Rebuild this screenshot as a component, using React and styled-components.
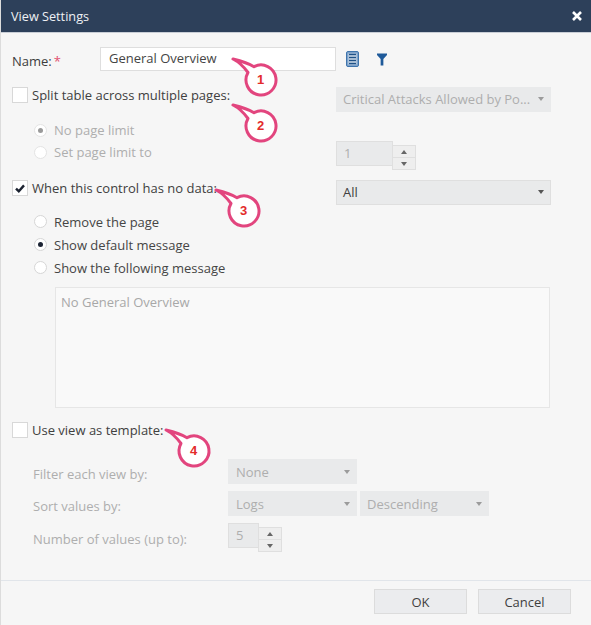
import React from 'react';
import styled, { createGlobalStyle } from 'styled-components';

const Global = createGlobalStyle`
  html, body { margin: 0; padding: 0; background: #f6f6f6; }
  body { font-family: "Open Sans", "Noto Sans", sans-serif; font-size: 13px; color: #3d3d3d; }
`;

const Dialog = styled.div`
  position: relative;
  width: 591px;
  height: 625px;
  background: #f6f6f6;
  overflow: hidden;
  display: flex;
  flex-direction: column;
  border-left: 1px solid #dcdcdc;
  box-sizing: border-box;
`;
const Header = styled.header`
  height: 32px;
  flex: none;
  background: #2d405a;
  border-bottom: 1px solid #c9ced6;
  box-sizing: content-box;
  display: flex;
  align-items: center;
  justify-content: space-between;
  padding: 0 9px 0 10px;
  color: #eef1f5;
  font-size: 12.7px;
`;
const Close = styled.svg`
  width: 10px;
  height: 10px;
  margin-top: -1px;
`;
const Body = styled.main`
  flex: 1;
  display: flex;
  flex-direction: column;
  padding: 14px 0 0 11px;
  min-height: 0;
`;
const Row = styled.div`
  display: flex;
  align-items: ${p => p.$align || 'center'};
  height: ${p => p.$h}px;
  margin-top: ${p => p.$mt || 0}px;
  margin-left: ${p => p.$ml || 0}px;
`;
const NameLabel = styled.label`
  width: 88px;
  display: flex;
  gap: 2px;
  padding-top: 4px;
`;
const Star = styled.span`
  color: #e2506f;
`;
const TextInput = styled.div`
  width: 236px;
  height: 24px;
  box-sizing: border-box;
  background: #fff;
  border: 1px solid #dedede;
  padding-left: 8px;
  line-height: 21px;
  color: #444;
`;
const IconGroup = styled.div`
  display: flex;
  align-items: center;
  margin-left: 10px;
  gap: 18px;
`;
const CheckBox = styled.span`
  width: 16px;
  height: 16px;
  box-sizing: border-box;
  border: 1px solid #d8d8d8;
  background: #fff;
  flex: none;
  display: flex;
  align-items: center;
  justify-content: center;
`;
const CheckLabel = styled.span`
  margin-left: 4px;
  width: 304px;
  flex: none;
  color: #404040;
  line-height: 16px;
`;
const Radio = styled.span`
  width: 13px;
  height: 13px;
  border-radius: 50%;
  box-sizing: border-box;
  border: 1px solid ${p => p.$disabled ? '#e4e4e4' : '#d6d6d6'};
  background: #fff;
  flex: none;
  display: flex;
  align-items: center;
  justify-content: center;
  margin-right: 7px;
  margin-top: ${p => p.$mt || 0}px;
  &::after {
    content: '';
    display: ${p => p.$on ? 'block' : 'none'};
    width: 5px;
    height: 5px;
    border-radius: 50%;
    background: ${p => p.$disabled ? '#9a9a9a' : '#1c2434'};
  }
`;
const RadioText = styled.span`
  color: ${p => p.$disabled ? '#aeaeae' : '#454545'};
  width: ${p => p.$w ? `${p.$w}px` : 'auto'};
  line-height: 22px;
  flex: none;
`;
const Select = styled.div`
  width: ${p => p.$w}px;
  height: 25px;
  box-sizing: border-box;
  background: #e9eaeb;
  border: 1px solid ${p => p.$disabled ? '#e9eaeb' : '#dfdfdf'};
  margin-right: ${p => p.$mr || 0}px;
  padding: 0 7px ${p => p.$pb || 0}px ${p => p.$pl || 6}px;
  display: flex;
  align-items: center;
  justify-content: space-between;
  color: ${p => p.$disabled ? '#aeaeae' : '#404040'};
  flex: none;
  &::after {
    content: '';
    border-left: 3.5px solid transparent;
    border-right: 3.5px solid transparent;
    border-top: 4px solid ${p => p.$disabled ? '#9b9b9b' : '#555'};
    margin-right: -1px;
  }
`;
const Spinner = styled.div`
  display: flex;
  width: ${p => p.$w}px;
  flex: none;
  align-items: flex-start;
`;
const SpinField = styled.div`
  flex: 1;
  height: 25px;
  box-sizing: border-box;
  background: #e9eaeb;
  border: 1px solid #dfdfdf;
  color: #aeaeae;
  padding-left: 7px;
  line-height: 23px;
`;
const SpinButtons = styled.div`
  width: 24px;
  margin-left: -1px;
  margin-top: 4px;
  display: flex;
  flex-direction: column;
  border: 1px solid #dfdfdf;
  box-sizing: border-box;
  background: #eeeeee;
`;
const SpinBtn = styled.span`
  height: 11px;
  display: flex;
  align-items: center;
  justify-content: center;
  & + & { border-top: 1px solid #dfdfdf; }
  &::after {
    content: '';
    border-left: 3.5px solid transparent;
    border-right: 3.5px solid transparent;
    ${p => p.$up ? 'border-bottom: 4px solid #666;' : 'border-top: 4px solid #666;'}
  }
`;
const MessageBox = styled.div`
  margin: 8px 0 0 43px;
  width: 495px;
  height: 121px;
  box-sizing: border-box;
  background: #f9f9f9;
  border: 1px solid #e6e6e6;
  padding: 5px 5px;
  color: #a8a8a8;
`;
const FieldLabel = styled.span`
  width: 216px;
  padding-left: 21px;
  box-sizing: border-box;
  color: #aeaeae;
  flex: none;
  position: relative;
  top: ${p => p.$dy}px;
`;
const Footer = styled.footer`
  height: 45px;
  box-sizing: border-box;
  flex: none;
  border-top: 1px solid #e1e5ea;
  display: flex;
  justify-content: flex-end;
  align-items: flex-start;
  gap: 11px;
  padding: 8px 20px 0 0;
`;
const Button = styled.button`
  width: 93px;
  height: 25px;
  border: 1px solid #dcdcdc;
  background: #ebecee;
  font: inherit;
  color: #3f3f3f;
  padding: 0;
`;
const CalloutMark = styled.svg`
  position: absolute;
  left: ${p => p.$x - 31}px;
  top: ${p => p.$y - 24}px;
  width: 50px;
  height: 44px;
  overflow: visible;
`;
const CalloutNum = styled.text`
  font-family: "Liberation Sans", Arial, sans-serif;
  font-size: 13px;
  font-weight: 700;
  fill: #e32b2b;
  text-anchor: middle;
`;

const Callout = ({ x, y, n }) => (
  <CalloutMark $x={x} $y={y} viewBox="-30 -24 50 44">
    <path d="M-28 -21 C-20 -19 -13 -17 -7 -13.3 A15 15 0 1 1 -13 -7.5 C-17 -13 -22 -18 -28 -21 Z"
      fill="#fff" stroke="#e2457e" strokeWidth="3" strokeLinejoin="round" />
    <CalloutNum x="-0.5" y="4">{n}</CalloutNum>
  </CalloutMark>
);

const Check = () => (
  <svg width="10" height="9" viewBox="0 0 10 9">
    <path d="M1 4.6 L3.8 7.2 L9 1.4" fill="none" stroke="#1b2230" strokeWidth="2.4" />
  </svg>
);

const TableIcon = () => (
  <svg width="13" height="16" viewBox="0 0 13 16">
    <rect x="0.5" y="0.5" width="12" height="15" rx="1.5" fill="#7ea3cb" stroke="#3f75ad" />
    <rect x="2.5" y="2.5" width="8" height="11" fill="#d3dfeb" />
    <path d="M3 3.5h7M3 6.5h7M3 9.5h7M3 12.5h7" stroke="#1f5288" strokeWidth="1.4" />
  </svg>
);

const FilterIcon = () => (
  <svg width="10" height="13" viewBox="0 0 11 13">
    <path d="M0 0 H11 V1.5 L7 6 V13 H4 V6 L0 1.5 Z" fill="#1f5a9a" />
  </svg>
);

const NumberSpinner = ({ w, value }) => (
  <Spinner $w={w}>
    <SpinField>{value}</SpinField>
    <SpinButtons><SpinBtn $up /><SpinBtn /></SpinButtons>
  </Spinner>
);

export default function App() {
  return (
    <Dialog>
      <Global />
      <Header>
        <span>View Settings</span>
        <Close viewBox="0 0 10 10">
          <path d="M1 1 L9 9 M9 1 L1 9" stroke="#fff" strokeWidth="2.6" />
        </Close>
      </Header>
      <Body>
        <Row $h={24}>
          <NameLabel>Name:<Star>*</Star></NameLabel>
          <TextInput>General Overview</TextInput>
          <IconGroup><TableIcon /><FilterIcon /></IconGroup>
        </Row>
        <Row $h={25} $mt={16} $align="flex-start">
          <CheckBox />
          <CheckLabel>Split table across multiple pages:</CheckLabel>
          <Select $w={215} $pb={2} $disabled>Critical Attacks Allowed by Po...</Select>
        </Row>
        <Row $h={22} $mt={7} $ml={22}>
          <Radio $on $disabled /><RadioText $disabled>No page limit</RadioText>
        </Row>
        <Row $h={22} $ml={22} $align="flex-start">
          <Radio $disabled $mt={5} />
          <RadioText $disabled $w={282}>Set page limit to</RadioText>
          <NumberSpinner w={80} value="1" />
        </Row>
        <Row $h={25} $mt={17} $align="flex-start">
          <CheckBox><Check /></CheckBox>
          <CheckLabel>When this control has no data:</CheckLabel>
          <Select $w={215} $pb={2}>All</Select>
        </Row>
        <Row $h={23} $mt={5} $ml={22}>
          <Radio /><RadioText>Remove the page</RadioText>
        </Row>
        <Row $h={23} $ml={22}>
          <Radio $on /><RadioText>Show default message</RadioText>
        </Row>
        <Row $h={23} $ml={22}>
          <Radio /><RadioText>Show the following message</RadioText>
        </Row>
        <MessageBox>No General Overview</MessageBox>
        <Row $h={22} $mt={14} $align="flex-start">
          <CheckBox />
          <CheckLabel>Use view as template:</CheckLabel>
        </Row>
        <Row $h={25} $mt={15}>
          <FieldLabel $dy={2}>Filter each view by:</FieldLabel>
          <Select $w={129} $pl={7} $disabled>None</Select>
        </Row>
        <Row $h={25} $mt={7}>
          <FieldLabel $dy={2}>Sort values by:</FieldLabel>
          <Select $w={129} $mr={3} $pl={7} $disabled>Logs</Select>
          <Select $w={129} $disabled>Descending</Select>
        </Row>
        <Row $h={30} $mt={7} $align="flex-start">
          <FieldLabel $dy={7}>Number of values (up to):</FieldLabel>
          <NumberSpinner w={54} value="5" />
        </Row>
      </Body>
      <Footer>
        <Button>OK</Button>
        <Button>Cancel</Button>
      </Footer>
      <Callout x={261} y={80} n="1" />
      <Callout x={261} y={126} n="2" />
      <Callout x={244} y={211} n="3" />
      <Callout x={194} y={451} n="4" />
    </Dialog>
  );
}
